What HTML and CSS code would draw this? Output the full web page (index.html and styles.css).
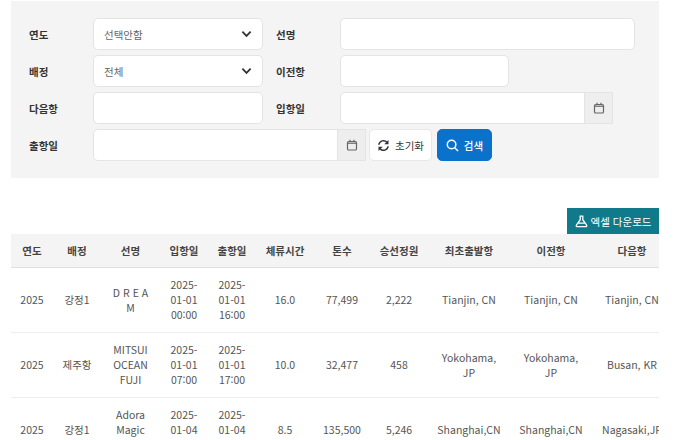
FILE: index.html
```html
<!DOCTYPE html>
<html lang="ko">
<head>
  <meta charset="UTF-8">
  <meta name="viewport" content="width=device-width, initial-scale=1.0">
  <title>입출항 현황</title>
  <link rel="stylesheet" href="styles.css">
</head>
<body>
  <form class="search-box">
    <div class="search-row">
      <label class="label">연도</label>
      <div class="select field-left">
        <span>선택안함</span>
        <svg class="chevron" viewBox="0 0 12 8"><path d="M1.5 1.5 6 6l4.5-4.5"/></svg>
      </div>
      <label class="label label-right">선명</label>
      <input class="input input-wide" type="text">
    </div>
    <div class="search-row">
      <label class="label">배정</label>
      <div class="select field-left">
        <span>전체</span>
        <svg class="chevron" viewBox="0 0 12 8"><path d="M1.5 1.5 6 6l4.5-4.5"/></svg>
      </div>
      <label class="label label-right">이전항</label>
      <input class="input input-mid" type="text">
    </div>
    <div class="search-row">
      <label class="label">다음항</label>
      <input class="input field-left" type="text">
      <label class="label label-right">입항일</label>
      <div class="date-group">
        <input class="input date-input" type="text">
        <span class="date-addon">
          <svg class="calendar" viewBox="0 0 12 12"><rect x="1.5" y="2.5" width="9" height="8.5" rx="1.3"/><path d="M1.5 4.2h9"/><path d="M4 .8v2M8 .8v2"/></svg>
        </span>
      </div>
    </div>
    <div class="search-row">
      <label class="label">출항일</label>
      <div class="date-group">
        <input class="input date-input" type="text">
        <span class="date-addon">
          <svg class="calendar" viewBox="0 0 12 12"><rect x="1.5" y="2.5" width="9" height="8.5" rx="1.3"/><path d="M1.5 4.2h9"/><path d="M4 .8v2M8 .8v2"/></svg>
        </span>
      </div>
      <button class="btn btn-reset" type="button">
        <svg class="btn-icon icon-sync" viewBox="0 0 14 14"><path d="M2 6.2A5 5 0 0 1 10.8 3.6M12 7.8A5 5 0 0 1 3.2 10.4"/><path class="fill" d="M12.4 1v4.6H7.8zM1.6 13V8.4h4.6z"/></svg>
        초기화
      </button>
      <button class="btn btn-search" type="button">
        <svg class="btn-icon icon-search" viewBox="0 0 14 14"><circle cx="6" cy="6" r="4.6"/><path d="m9.4 9.4 3.6 3.6"/></svg>
        검색
      </button>
    </div>
  </form>

  <div class="table-tools">
    <button class="btn-excel" type="button">
      <svg class="btn-icon" viewBox="0 0 14 14"><path d="M5 1.2h4M5.6 1.2v3.9L1.5 11a1 1 0 0 0 .8 1.6h9.4a1 1 0 0 0 .8-1.6L8.4 5.1V1.2M3.6 8.8h6.8"/></svg>
      엑셀 다운로드
    </button>
  </div>

  <div class="table-wrap">
    <table class="port-table">
      <colgroup>
        <col style="width:42px"><col style="width:48px"><col style="width:59px"><col style="width:48px"><col style="width:48px"><col style="width:58px"><col style="width:56px"><col style="width:58px"><col style="width:82px"><col style="width:82px"><col style="width:80px">
      </colgroup>
      <thead>
        <tr>
          <th>연도</th><th>배정</th><th>선명</th><th>입항일</th><th>출항일</th><th>체류시간</th><th>톤수</th><th>승선정원</th><th>최초출발항</th><th>이전항</th><th>다음항</th>
        </tr>
      </thead>
      <tbody>
        <tr>
          <td>2025</td><td>강정1</td><td>D R E A M</td><td>2025-01-01 00:00</td><td>2025-01-01 16:00</td><td>16.0</td><td>77,499</td><td>2,222</td><td>Tianjin, CN</td><td>Tianjin, CN</td><td>Tianjin, CN</td>
        </tr>
        <tr>
          <td>2025</td><td>제주항</td><td>MITSUI OCEAN FUJI</td><td>2025-01-01 07:00</td><td>2025-01-01 17:00</td><td>10.0</td><td>32,477</td><td>458</td><td>Yokohama, JP</td><td>Yokohama, JP</td><td>Busan, KR</td>
        </tr>
        <tr>
          <td>2025</td><td>강정1</td><td>Adora Magic City</td><td>2025-01-04 14:00</td><td>2025-01-04 22:30</td><td>8.5</td><td>135,500</td><td>5,246</td><td>Shanghai,CN</td><td>Shanghai,CN</td><td>Nagasaki,JP</td>
        </tr>
      </tbody>
    </table>
  </div>
</body>
</html>
```

FILE: styles.css
```css
* {
  box-sizing: border-box;
}

html, body {
  height: 440px;
  overflow: hidden;
}

body {
  margin: 0;
  padding: 1px 41px 0 11px;
  background: #fff;
  color: #555;
  font-family: "Noto Sans CJK KR", "Noto Sans", sans-serif;
  font-size: 10.5px;
}

.search-box {
  display: flex;
  flex-direction: column;
  gap: 5px;
  height: 177px;
  padding: 17px 18px 0;
  background: #f4f4f4;
}

.search-row {
  display: flex;
  align-items: center;
  height: 32px;
}

.label {
  flex: none;
  width: 64px;
  color: #333;
  font-weight: 700;
}

.label-right {
  margin-left: 13px;
}

.field-left {
  width: 170px;
}

.input,
.select {
  height: 32px;
  border: 1px solid #e4e4e4;
  border-radius: 5px;
  background: #fff;
}

.input-wide {
  width: 295px;
}

.input-mid {
  width: 169px;
}

.select {
  display: flex;
  align-items: center;
  justify-content: space-between;
  padding: 0 10px;
  color: #666;
}

.chevron {
  width: 11px;
  height: 8px;
  fill: none;
  stroke: #333;
  stroke-width: 2;
}

.date-group {
  display: flex;
}

.date-input {
  width: 245px;
  border-radius: 5px 0 0 5px;
}

.date-addon {
  display: flex;
  align-items: center;
  justify-content: center;
  width: 29px;
  height: 32px;
  margin-left: -1px;
  border: 1px solid #e4e4e4;
  background: #eee;
}

.calendar {
  width: 12px;
  height: 12px;
  fill: none;
  stroke: #666;
  stroke-width: 1.2;
}

.btn {
  display: flex;
  align-items: center;
  justify-content: center;
  gap: 5px;
  height: 32px;
  padding: 0;
  border-radius: 5px;
  font: inherit;
}

.btn-icon {
  width: 13px;
  height: 13px;
  fill: none;
  stroke: currentColor;
  stroke-width: 1.4;
}

.btn-icon .fill {
  fill: currentColor;
  stroke: none;
}

.icon-sync {
  stroke-width: 1.6;
}

.icon-search {
  stroke-width: 1.6;
}

.btn-reset {
  width: 63px;
  margin-left: 3px;
  border: 1px solid #e8e8e8;
  background: #fff;
  color: #333;
}

.btn-search {
  width: 55px;
  margin-left: 5px;
  border: 1px solid #0b72cc;
  background: #0b72cc;
  color: #fff;
  font-weight: 500;
}

.table-tools {
  display: flex;
  justify-content: flex-end;
  margin-top: 30px;
}

.btn-excel {
  display: flex;
  align-items: center;
  justify-content: center;
  gap: 3px;
  width: 92px;
  height: 26px;
  padding: 0;
  border: 0;
  background: #10798a;
  color: #fff;
  font: inherit;
}

.table-wrap {
  overflow: hidden;
}

.port-table {
  width: 661px;
  table-layout: fixed;
  border-collapse: collapse;
  line-height: 15px;
  text-align: center;
}

.port-table th {
  height: 33px;
  padding: 0 2px;
  border-bottom: 1px solid #e0e0e0;
  background: #f4f4f4;
  color: #444;
  font-weight: 700;
}

.port-table td {
  height: 65px;
  padding: 0 8px;
  border-bottom: 1px solid #eee;
}
```
